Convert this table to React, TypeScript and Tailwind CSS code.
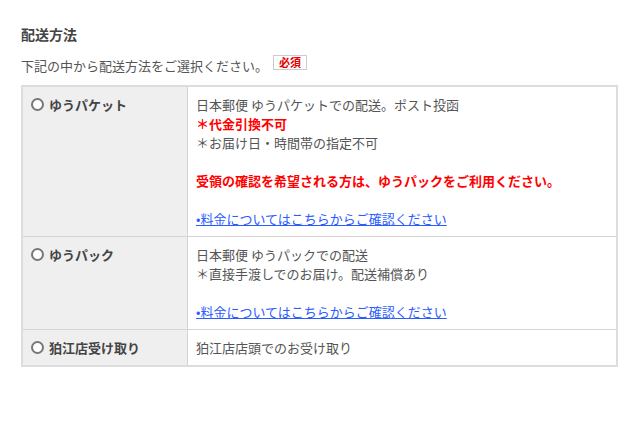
export default function App() {
  const line = "h-[19px] whitespace-nowrap"
  const rows = [
    {
      label: "ゆうパケット",
      body: (
        <>
          <p className={line}>日本郵便 ゆうパケットでの配送。ポスト投函</p>
          <p className={`${line} font-bold text-[#ff0000]`}>＊代金引換不可</p>
          <p className={line}>＊お届け日・時間帯の指定不可</p>
          <p className={line}></p>
          <p className={`${line} font-bold text-[#ff0000]`}>受領の確認を希望される方は、ゆうパックをご利用ください。</p>
          <p className={line}></p>
          <p className={line}>
            <a href="#" className="text-[#2b5cff] underline">•料金についてはこちらからご確認ください</a>
          </p>
        </>
      ),
    },
    {
      label: "ゆうパック",
      body: (
        <>
          <p className={line}>日本郵便 ゆうパックでの配送</p>
          <p className={line}>＊直接手渡しでのお届け。配送補償あり</p>
          <p className={line}></p>
          <p className={line}>
            <a href="#" className="text-[#2b5cff] underline">•料金についてはこちらからご確認ください</a>
          </p>
        </>
      ),
    },
    {
      label: "狛江店受け取り",
      body: <p className={line}>狛江店店頭でのお受け取り</p>,
    },
  ]

  return (
    <div className="min-h-[429px] bg-white pl-[21px] pt-[24px] text-[13px] leading-[19px] text-[#555] font-['Noto_Sans_CJK_JP',sans-serif]">
      <h2 className="h-[20px] text-[14px] leading-[20px] font-bold text-[#444]">配送方法</h2>

      <div className="mt-[12px] flex h-[19px] items-start">
        <span>下記の中から配送方法をご選択ください。</span>
        <span className="ml-[5px] -mt-[1px] inline-flex h-[15px] items-center border border-[#ccc] px-[5px] text-[11px] leading-none font-bold text-[#e60000]">必須</span>
      </div>

      <div className="mt-[10px] w-[597px] border-2 border-[#ddd]">
        {rows.map((row, i) => (
          <div key={row.label} className={`grid grid-cols-[165px_1fr] ${i > 0 ? "border-t border-[#d4d4d4]" : ""}`}>
            <div className="flex items-start gap-[5px] border-r border-[#d4d4d4] bg-[#efefef] px-[8px] py-[8px] font-bold text-[#444]">
              <span className="mt-[3px] h-[13px] w-[13px] shrink-0 rounded-full border-2 border-[#777] bg-white" />
              <span className="h-[19px]">{row.label}</span>
            </div>
            <div className="px-[8px] py-[8px]">{row.body}</div>
          </div>
        ))}
      </div>
    </div>
  )
}
